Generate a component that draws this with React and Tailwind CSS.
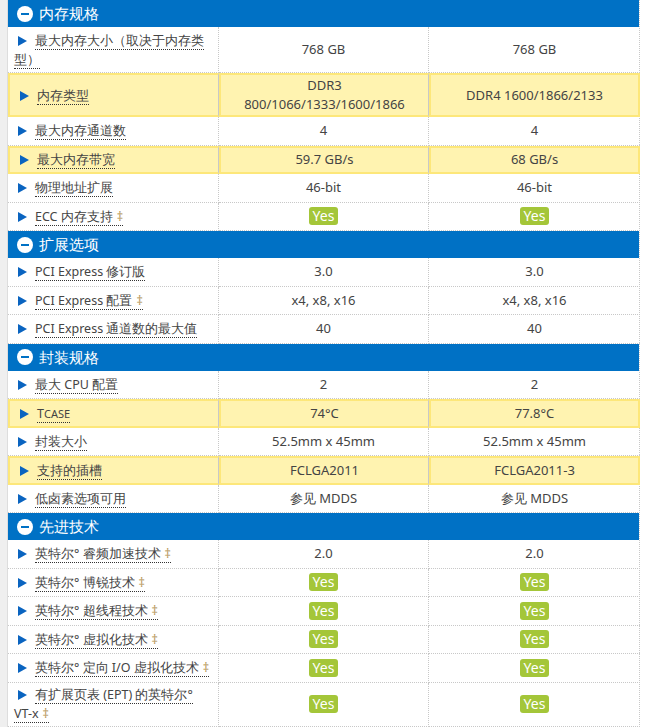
import React from 'react';

const D = '‡';
const sections = [
  { title: '内存规格', rows: [
    { l: '最大内存大小（取决于内存类型）', a: '768 GB', b: '768 GB', h: 'h-[46px]' },
    { l: '内存类型', a: <>DDR3<br />800/1066/1333/1600/1866</>, b: 'DDR4 1600/1866/2133', y: true, h: 'h-[44px]' },
    { l: '最大内存通道数', a: '4', b: '4' },
    { l: '最大内存带宽', a: '59.7 GB/s', b: '68 GB/s', y: true },
    { l: '物理地址扩展', a: '46-bit', b: '46-bit' },
    { l: 'ECC 内存支持', d: true, a: 'Y', b: 'Y' },
  ]},
  { title: '扩展选项', rows: [
    { l: 'PCI Express 修订版', a: '3.0', b: '3.0' },
    { l: 'PCI Express 配置', d: true, a: 'x4, x8, x16', b: 'x4, x8, x16' },
    { l: 'PCI Express 通道数的最大值', a: '40', b: '40' },
  ]},
  { title: '封装规格', rows: [
    { l: '最大 CPU 配置', a: '2', b: '2' },
    { l: 'T', sub: 'CASE', a: '74°C', b: '77.8°C', y: true },
    { l: '封装大小', a: '52.5mm x 45mm', b: '52.5mm x 45mm' },
    { l: '支持的插槽', a: 'FCLGA2011', b: 'FCLGA2011-3', y: true },
    { l: '低卤素选项可用', a: '参见 MDDS', b: '参见 MDDS' },
  ]},
  { title: '先进技术', rows: [
    { l: '英特尔° 睿频加速技术', d: true, a: '2.0', b: '2.0' },
    { l: '英特尔° 博锐技术', d: true, a: 'Y', b: 'Y' },
    { l: '英特尔° 超线程技术', d: true, a: 'Y', b: 'Y' },
    { l: '英特尔° 虚拟化技术', d: true, a: 'Y', b: 'Y' },
    { l: '英特尔° 定向 I/O 虚拟化技术', d: true, a: 'Y', b: 'Y' },
    { l: '有扩展页表 (EPT) 的英特尔° VT-x', d: true, a: 'Y', b: 'Y', h: 'h-[44px]' },
  ]},
];

function Val({ v }) {
  if (v === 'Y') return <span className="inline-block rounded-[3px] bg-[#a4c639] px-1 leading-[18px] text-white text-[14px]">Yes</span>;
  return <span>{v}</span>;
}

function Arrow() {
  return (
    <svg width="9" height="10" viewBox="0 0 9 10" className="inline-block mr-[8px] ml-[4px] align-[-1px]">
      <path d="M0 0L9 5L0 10Z" fill="#0a64c0" />
    </svg>
  );
}

function Row({ r }) {
  const cell = r.y ? 'bg-[#fff3b0] border-2 border-[#fde77a]' : 'border-b border-dotted border-[#c8c8c8]';
  return (
    <div className={`grid grid-cols-[211px_210px_211px] ${r.h || 'h-[28.5px]'}`}>
      <div className={`${cell} border-r border-r-dotted border-r-[#c8c8c8] flex items-center pl-[6px] pr-[4px] leading-[19px] text-[12.5px]`}>
        <div>
          <Arrow />
          <span className="border-b border-dotted border-[#333]">
            {r.l}{r.sub && <span className="text-[11px]">{r.sub}</span>}
            {r.d && <span className="text-[#b89a60] ml-1">{D}</span>}
          </span>
        </div>
      </div>
      <div className={`${cell} border-r border-r-dotted border-r-[#c8c8c8] flex items-center justify-center text-center leading-[19px]`}><Val v={r.a} /></div>
      <div className={`${cell} flex items-center justify-center text-center leading-[19px]`}><Val v={r.b} /></div>
    </div>
  );
}

export default function App() {
  return (
    <div className="w-[653px] h-[727px] overflow-hidden bg-white font-['Open_Sans','Noto_Sans_CJK_SC',sans-serif] text-[13px] text-[#444]">
      <div className="flex">
        <div className="w-[8px] bg-[#efefef] border-r border-[#ddd]" />
        <div className="w-[632px] border-r border-dotted border-[#c8c8c8]">
          {sections.map(s => (
            <div key={s.title}>
              <div className="h-[27px] bg-[#0071c5] flex items-center px-[9px] text-white text-[15px]">
                <span className="w-[16px] h-[16px] rounded-full bg-white flex items-center justify-center mr-[6px]">
                  <span className="w-[8px] h-[2px] bg-[#0071c5]" />
                </span>
                {s.title}
              </div>
              {s.rows.map((r, i) => <Row key={i} r={r} />)}
            </div>
          ))}
        </div>
      </div>
    </div>
  );
}
